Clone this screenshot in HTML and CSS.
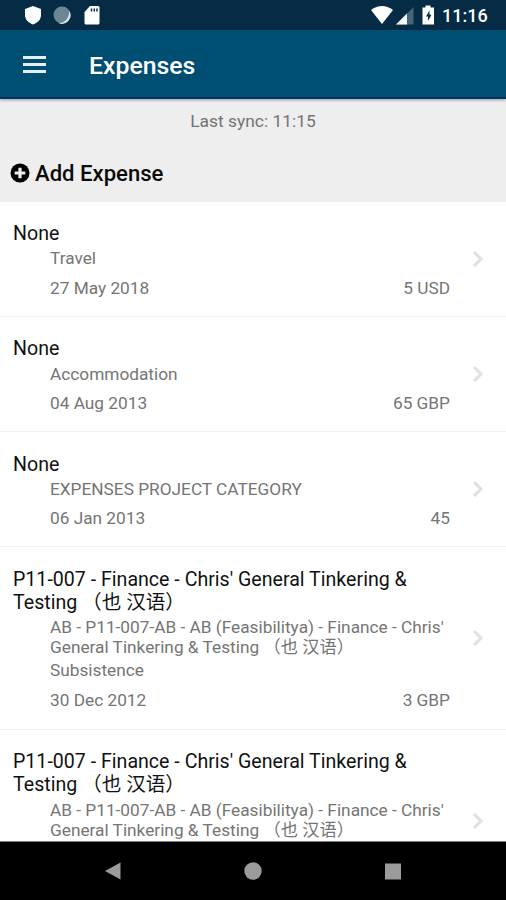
FILE: index.html
```html
<!DOCTYPE html>
<html lang="en">
  <head>
    <meta charset="UTF-8" />
    <meta name="viewport" content="width=device-width, initial-scale=1.0" />
    <title>Expenses</title>
    <link rel="stylesheet" href="styles.css">
  </head>
  <body>
    <div class="status-bar">
      <svg class="status-left" width="84" height="30" viewBox="0 0 84 30">
        <path d="M9 6l8 3v6c0 4.500-3 7.500-8 9.500C4 22.500 1 19.500 1 15V9z" fill="#fff" />
        <circle cx="38" cy="15" r="8.500" fill="#6c8794" />
        <path d="M45 10.500a8.500 8.500 0 0 1-11 12.300c6.500 1 12-5 11-12.300z" fill="#dbe3e7" />
        <path d="M66 6h8q1.500 0 1.500 1.500v15.500q0 1.500-1.500 1.500H62Q60.500 24.500 60.500 23V12z" fill="#fff" />
        <path d="M67.500 8.500v3M70.300 8.500v3M73 8.500v3" stroke="#062c44" stroke-width="1.500" />
      </svg>
      <svg class="status-right" width="66" height="30" viewBox="0 0 66 30">
        <path d="M0 10Q11 2 22 10L11 24z" fill="#fff" />
        <path d="M42.500 7v17.500H25z" fill="#45657a" />
        <path d="M36 13.500v11H25z" fill="#fff" />
        <path d="M54.500 5.500h5v2h3.500v17H51.500v-17h3z" fill="#fff" />
        <path d="M58.500 10.500l-3.500 6h2v4.500l3.500-6.300h-2z" fill="#062c44" />
      </svg>
      <span class="clock">11:16</span>
    </div>

    <header class="app-bar">
      <div class="menu-icon"><span></span><span></span><span></span></div>
      <h1>Expenses</h1>
    </header>

    <main class="content">
      <div class="sync">Last sync: 11:15</div>
      <div class="add-expense">
        <svg width="20" height="20" viewBox="0 0 20 20">
          <circle cx="10" cy="10" r="9.500" fill="#000" />
          <path d="M10 4.700v10.600M4.700 10h10.600" stroke="#eee" stroke-width="3.200" />
        </svg>
        <span>Add Expense</span>
      </div>

      <div class="expense">
        <div class="title">None</div>
        <div class="detail">Travel</div>
        <div class="footer"><span>27 May 2018</span><span>5 USD</span></div>
        <svg class="arrow" width="12" height="18" viewBox="0 0 12 18"><path d="M2 2l7 7-7 7" /></svg>
      </div>

      <div class="expense">
        <div class="title">None</div>
        <div class="detail">Accommodation</div>
        <div class="footer"><span>04 Aug 2013</span><span>65 GBP</span></div>
        <svg class="arrow" width="12" height="18" viewBox="0 0 12 18"><path d="M2 2l7 7-7 7" /></svg>
      </div>

      <div class="expense">
        <div class="title">None</div>
        <div class="detail">EXPENSES PROJECT CATEGORY</div>
        <div class="footer"><span>06 Jan 2013</span><span>45</span></div>
        <svg class="arrow" width="12" height="18" viewBox="0 0 12 18"><path d="M2 2l7 7-7 7" /></svg>
      </div>

      <div class="expense long">
        <div class="title">P11-007 - Finance - Chris' General Tinkering &amp;<br>Testing <span class="cjk">（也 汉语）</span></div>
        <div class="detail">AB - P11-007-AB - AB (Feasibilitya) - Finance - Chris'<br>General Tinkering &amp; Testing <span class="cjk">（也 汉语）</span></div>
        <div class="detail">Subsistence</div>
        <div class="footer"><span>30 Dec 2012</span><span>3 GBP</span></div>
        <svg class="arrow" width="12" height="18" viewBox="0 0 12 18"><path d="M2 2l7 7-7 7" /></svg>
      </div>

      <div class="expense long">
        <div class="title">P11-007 - Finance - Chris' General Tinkering &amp;<br>Testing <span class="cjk">（也 汉语）</span></div>
        <div class="detail">AB - P11-007-AB - AB (Feasibilitya) - Finance - Chris'<br>General Tinkering &amp; Testing <span class="cjk">（也 汉语）</span></div>
        <svg class="arrow" width="12" height="18" viewBox="0 0 12 18"><path d="M2 2l7 7-7 7" /></svg>
      </div>
    </main>

    <nav class="nav-bar">
      <svg width="18" height="20" viewBox="0 0 18 20"><path d="M1 10L16.500 1.500v17z" /></svg>
      <svg width="18" height="20" viewBox="0 0 18 20"><circle cx="9" cy="10" r="8.700" /></svg>
      <svg width="18" height="20" viewBox="0 0 18 20"><path d="M1 2.500h16v16H1z" /></svg>
    </nav>
  </body>
</html>
```
FILE: styles.css
```css
* {
  box-sizing: border-box;
}

body {
  margin: 0;
  height: 900px;
  display: flex;
  flex-direction: column;
  overflow: hidden;
  background: #fff;
  font-family: Roboto, "Noto Sans CJK SC", sans-serif;
}

.status-bar {
  flex: none;
  height: 30px;
  display: flex;
  align-items: center;
  padding: 0 19px 0 24px;
  background: #052c44;
  color: #fff;
}

.status-right {
  margin-left: auto;
}

.clock {
  width: 45px;
  margin-left: 5px;
  padding-top: 1px;
  font-size: 18px;
  font-weight: 500;
  white-space: nowrap;
}

.app-bar {
  flex: none;
  height: 69px;
  display: flex;
  align-items: center;
  padding-left: 23px;
  background: #004f73;
  border-bottom: 2px solid #003466;
  color: #fff;
  z-index: 1;
  box-shadow: 0 1px 3px rgba(0, 0, 0, 0.35);
}

.app-bar h1 {
  margin: 5px 0 0 43px;
  font-size: 24.800px;
  font-weight: 500;
  line-height: 30px;
}

.menu-icon {
  width: 23px;
  display: grid;
  gap: 4px;
  padding-top: 2px;
}

.menu-icon span {
  height: 3px;
  background: #e6eff5;
}

.content {
  flex: 1;
  min-height: 0;
  overflow: hidden;
  background: #eee;
}

.sync {
  height: 45px;
  padding-top: 12px;
  text-align: center;
  font-size: 17.400px;
  line-height: 20px;
  color: #737373;
}

.add-expense {
  height: 57.500px;
  display: flex;
  align-items: center;
  gap: 5px;
  padding: 0 0 0 10px;
  font-size: 22.100px;
  font-weight: 500;
  color: #0a0a0a;
}

.expense {
  position: relative;
  padding: 20.500px 56px 18.200px 13px;
  border-bottom: 1px solid #f2f2f2;
  background: #fff;
}

.long {
  height: 182.500px;
}

.title {
  font-size: 19.600px;
  line-height: 23px;
  color: #111;
  white-space: nowrap;
}

.detail,
.footer {
  margin: 3.300px 0 0 37px;
  font-size: 17.250px;
  line-height: 20px;
  color: #757575;
  white-space: nowrap;
}

.footer {
  display: flex;
  justify-content: space-between;
  margin-top: 9.300px;
}

/* keeps the taller CJK glyphs from stretching the line */
.cjk {
  line-height: 1;
}

.arrow {
  position: absolute;
  right: 22px;
  top: 50%;
  margin-top: -9px;
  fill: none;
  stroke: #e0e0e0;
  stroke-width: 3;
}

.nav-bar {
  flex: none;
  height: 59px;
  display: flex;
  justify-content: center;
  align-items: center;
  gap: 122px;
  border-top: 1px solid #777;
  background: #000;
}

.nav-bar svg {
  fill: #9b9b9b;
}
```
